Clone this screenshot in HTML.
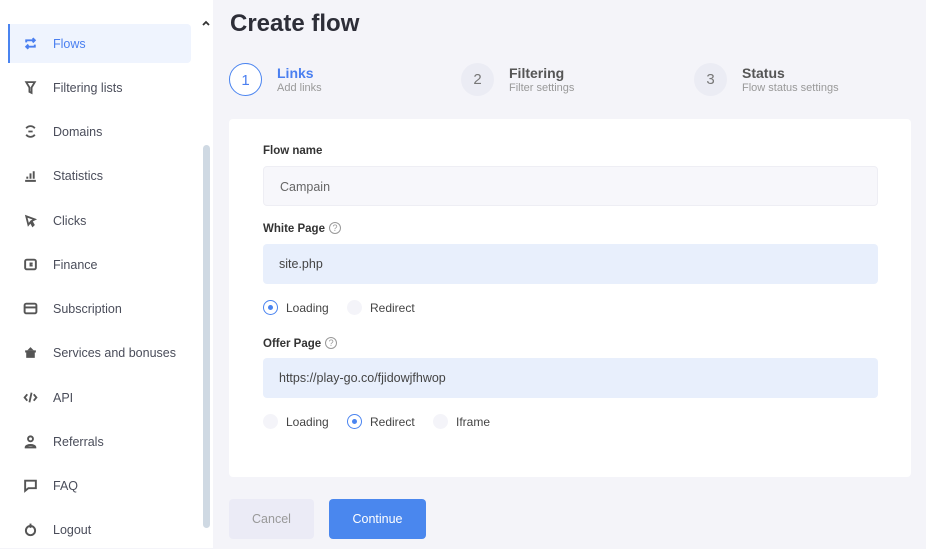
<!DOCTYPE html>
<html><head><meta charset="utf-8"><style>
*{box-sizing:border-box;margin:0;padding:0}
body{width:926px;height:548px;overflow:hidden;background:#f4f4f9;font-family:"Liberation Sans",sans-serif;position:relative}
.side{position:absolute;left:0;top:0;width:213px;height:548px;background:#fff}
.item{position:absolute;left:8px;width:183px;height:39px;display:flex;align-items:center;font-size:12.5px;color:#4a4d5a}
.item svg{position:absolute;left:15px;top:12px;width:15px;height:15px}
.item span{position:absolute;left:45px}
.act{background:#eff4fe;border-left:2px solid #4a84f0;border-radius:0 4px 4px 0;color:#4a7ff0}
.act svg{left:13px}.act span{left:43px}
.sb{position:absolute;left:203px;top:145px;width:7px;height:383px;background:#cfd9e3;border-radius:4px}
h1{position:absolute;left:230px;top:10px;font-size:24px;font-weight:bold;color:#2d2e38}
.step{position:absolute;top:63px}
.circ{position:absolute;left:0;top:0;width:33px;height:33px;border-radius:50%;background:#ebecf4;color:#777;font-size:15px;text-align:center;line-height:33px}
.st{position:absolute;left:48px;top:2px;font-size:14px;font-weight:bold;color:#555;white-space:nowrap}
.ss{position:absolute;left:48px;top:19px;font-size:11px;color:#999;white-space:nowrap}
.card{position:absolute;left:229px;top:119px;width:682px;height:358px;background:#fff;border-radius:4px}
.lbl{position:absolute;left:34px;font-size:11.5px;font-weight:bold;color:#333}
.q{display:inline-block;width:12px;height:12px;border:1px solid #999;border-radius:50%;font-size:9px;text-align:center;line-height:10px;color:#999;font-weight:normal;margin-left:4px;vertical-align:1px}
.inp{position:absolute;left:34px;width:615px;height:40px;border-radius:4px;background:#e8effc;font-size:12.5px;color:#444;padding-left:16px;line-height:40px}
.rad{position:absolute;font-size:12px;color:#444;white-space:nowrap}
.rad i{display:inline-block;width:15px;height:15px;border-radius:50%;background:#f4f4f9;vertical-align:-3px;margin-right:8px;position:relative}
.rad i.on{background:#fff;border:1.5px solid #4a84f0}
.rad i.on:after{content:"";position:absolute;left:3.5px;top:3.5px;width:5px;height:5px;border-radius:50%;background:#4a84f0}
.btn{position:absolute;top:499px;height:40px;border-radius:4px;font-size:12.5px;text-align:center;line-height:40px}
</style></head><body>
<div class="side">
<div class="item act" style="top:24px"><svg viewBox="0 0 14 14" fill="none" stroke="#4a7ff0" stroke-width="1.8"><path d="M3 6V4h8M9 2l2 2-2 2M11 8v2H3M5 12l-2-2 2-2"/></svg><span>Flows</span></div>
<div class="item" style="top:68px"><svg viewBox="0 0 14 14" fill="none" stroke="#555" stroke-width="1.7"><path d="M3 2h8l-3 5v5l-2-1V7z"/></svg><span>Filtering lists</span></div>
<div class="item" style="top:112px"><svg viewBox="0 0 14 14" fill="none" stroke="#555" stroke-width="1.7"><path d="M3 4a5 5 0 0 1 8 0M3 10a5 5 0 0 0 8 0M5 7h4"/></svg><span>Domains</span></div>
<div class="item" style="top:156px"><svg viewBox="0 0 14 14" fill="none" stroke="#555" stroke-width="1.8"><path d="M2 12h10M4 10V8M7 10V5M10 10V3"/></svg><span>Statistics</span></div>
<div class="item" style="top:201px"><svg viewBox="0 0 14 14" fill="none" stroke="#555" stroke-width="1.7"><path d="M3 3l8 3-3 1.5L10 11l-1 1-2-3.5L5 11z"/></svg><span>Clicks</span></div>
<div class="item" style="top:245px"><svg viewBox="0 0 14 14" fill="none" stroke="#555" stroke-width="1.8"><rect x="2" y="2.5" width="10" height="9" rx="1.5"/><path d="M9 6H7v2h2"/></svg><span>Finance</span></div>
<div class="item" style="top:289px"><svg viewBox="0 0 14 14" fill="none" stroke="#555" stroke-width="1.8"><rect x="1.5" y="2.5" width="11" height="9" rx="1.5"/><path d="M1.5 6h11"/></svg><span>Subscription</span></div>
<div class="item" style="top:333px"><svg viewBox="0 0 14 14" fill="#555"><rect x="2" y="5" width="10" height="2"/><rect x="3" y="7" width="8" height="5"/><path d="M4 5l3-3 3 3z"/></svg><span>Services and bonuses</span></div>
<div class="item" style="top:378px"><svg viewBox="0 0 14 14" fill="none" stroke="#555" stroke-width="1.7"><path d="M4 4L1.5 7 4 10M10 4l2.5 3L10 10M8 2.5L6 11.5"/></svg><span>API</span></div>
<div class="item" style="top:422px"><svg viewBox="0 0 14 14" fill="none" stroke="#555" stroke-width="1.8"><circle cx="7" cy="4.5" r="2.3"/><path d="M2.5 12.5c0-3 9-3 9 0z"/></svg><span>Referrals</span></div>
<div class="item" style="top:466px"><svg viewBox="0 0 14 14" fill="none" stroke="#555" stroke-width="1.8"><path d="M2 2.5h10v7H5l-3 2.5z"/></svg><span>FAQ</span></div>
<div class="item" style="top:510px"><svg viewBox="0 0 14 14" fill="none" stroke="#555" stroke-width="1.8"><circle cx="7" cy="8" r="4.3"/><path d="M7 1.5v4"/></svg><span>Logout</span></div>
<svg style="position:absolute;left:201px;top:19px" width="10" height="8" viewBox="0 0 10 8" fill="none" stroke="#333" stroke-width="1.8"><path d="M2 6l3-3 3 3"/></svg>
<div class="sb"></div>
</div>
<h1>Create flow</h1>
<div class="step" style="left:229px"><div class="circ" style="background:#fff;border:1.3px solid #4a84f0;color:#4a7ff0">1</div><div class="st" style="color:#4a7ff0">Links</div><div class="ss">Add links</div></div>
<div class="step" style="left:461px"><div class="circ">2</div><div class="st">Filtering</div><div class="ss">Filter settings</div></div>
<div class="step" style="left:694px"><div class="circ">3</div><div class="st">Status</div><div class="ss">Flow status settings</div></div>
<div class="card">
<div class="lbl" style="top:26px">Flow name</div>
<div class="inp" style="top:47px;background:#f7f7fb;border:1px solid #eeeef4;color:#666">Campain</div>
<div class="lbl" style="top:103px">White Page<span class="q">?</span></div>
<div class="inp" style="top:125px">site.php</div>
<div class="rad" style="left:34px;top:181px"><i class="on"></i>Loading</div>
<div class="rad" style="left:118px;top:181px"><i></i>Redirect</div>
<div class="lbl" style="top:218px">Offer Page<span class="q">?</span></div>
<div class="inp" style="top:239px">https://play-go.co/fjidowjfhwop</div>
<div class="rad" style="left:34px;top:295px"><i></i>Loading</div>
<div class="rad" style="left:118px;top:295px"><i class="on"></i>Redirect</div>
<div class="rad" style="left:204px;top:295px"><i></i>Iframe</div>
</div>
<div class="btn" style="left:229px;width:85px;background:#ebebf6;color:#999">Cancel</div>
<div class="btn" style="left:329px;width:97px;background:#4a87ee;color:#fff">Continue</div>
</body></html>
